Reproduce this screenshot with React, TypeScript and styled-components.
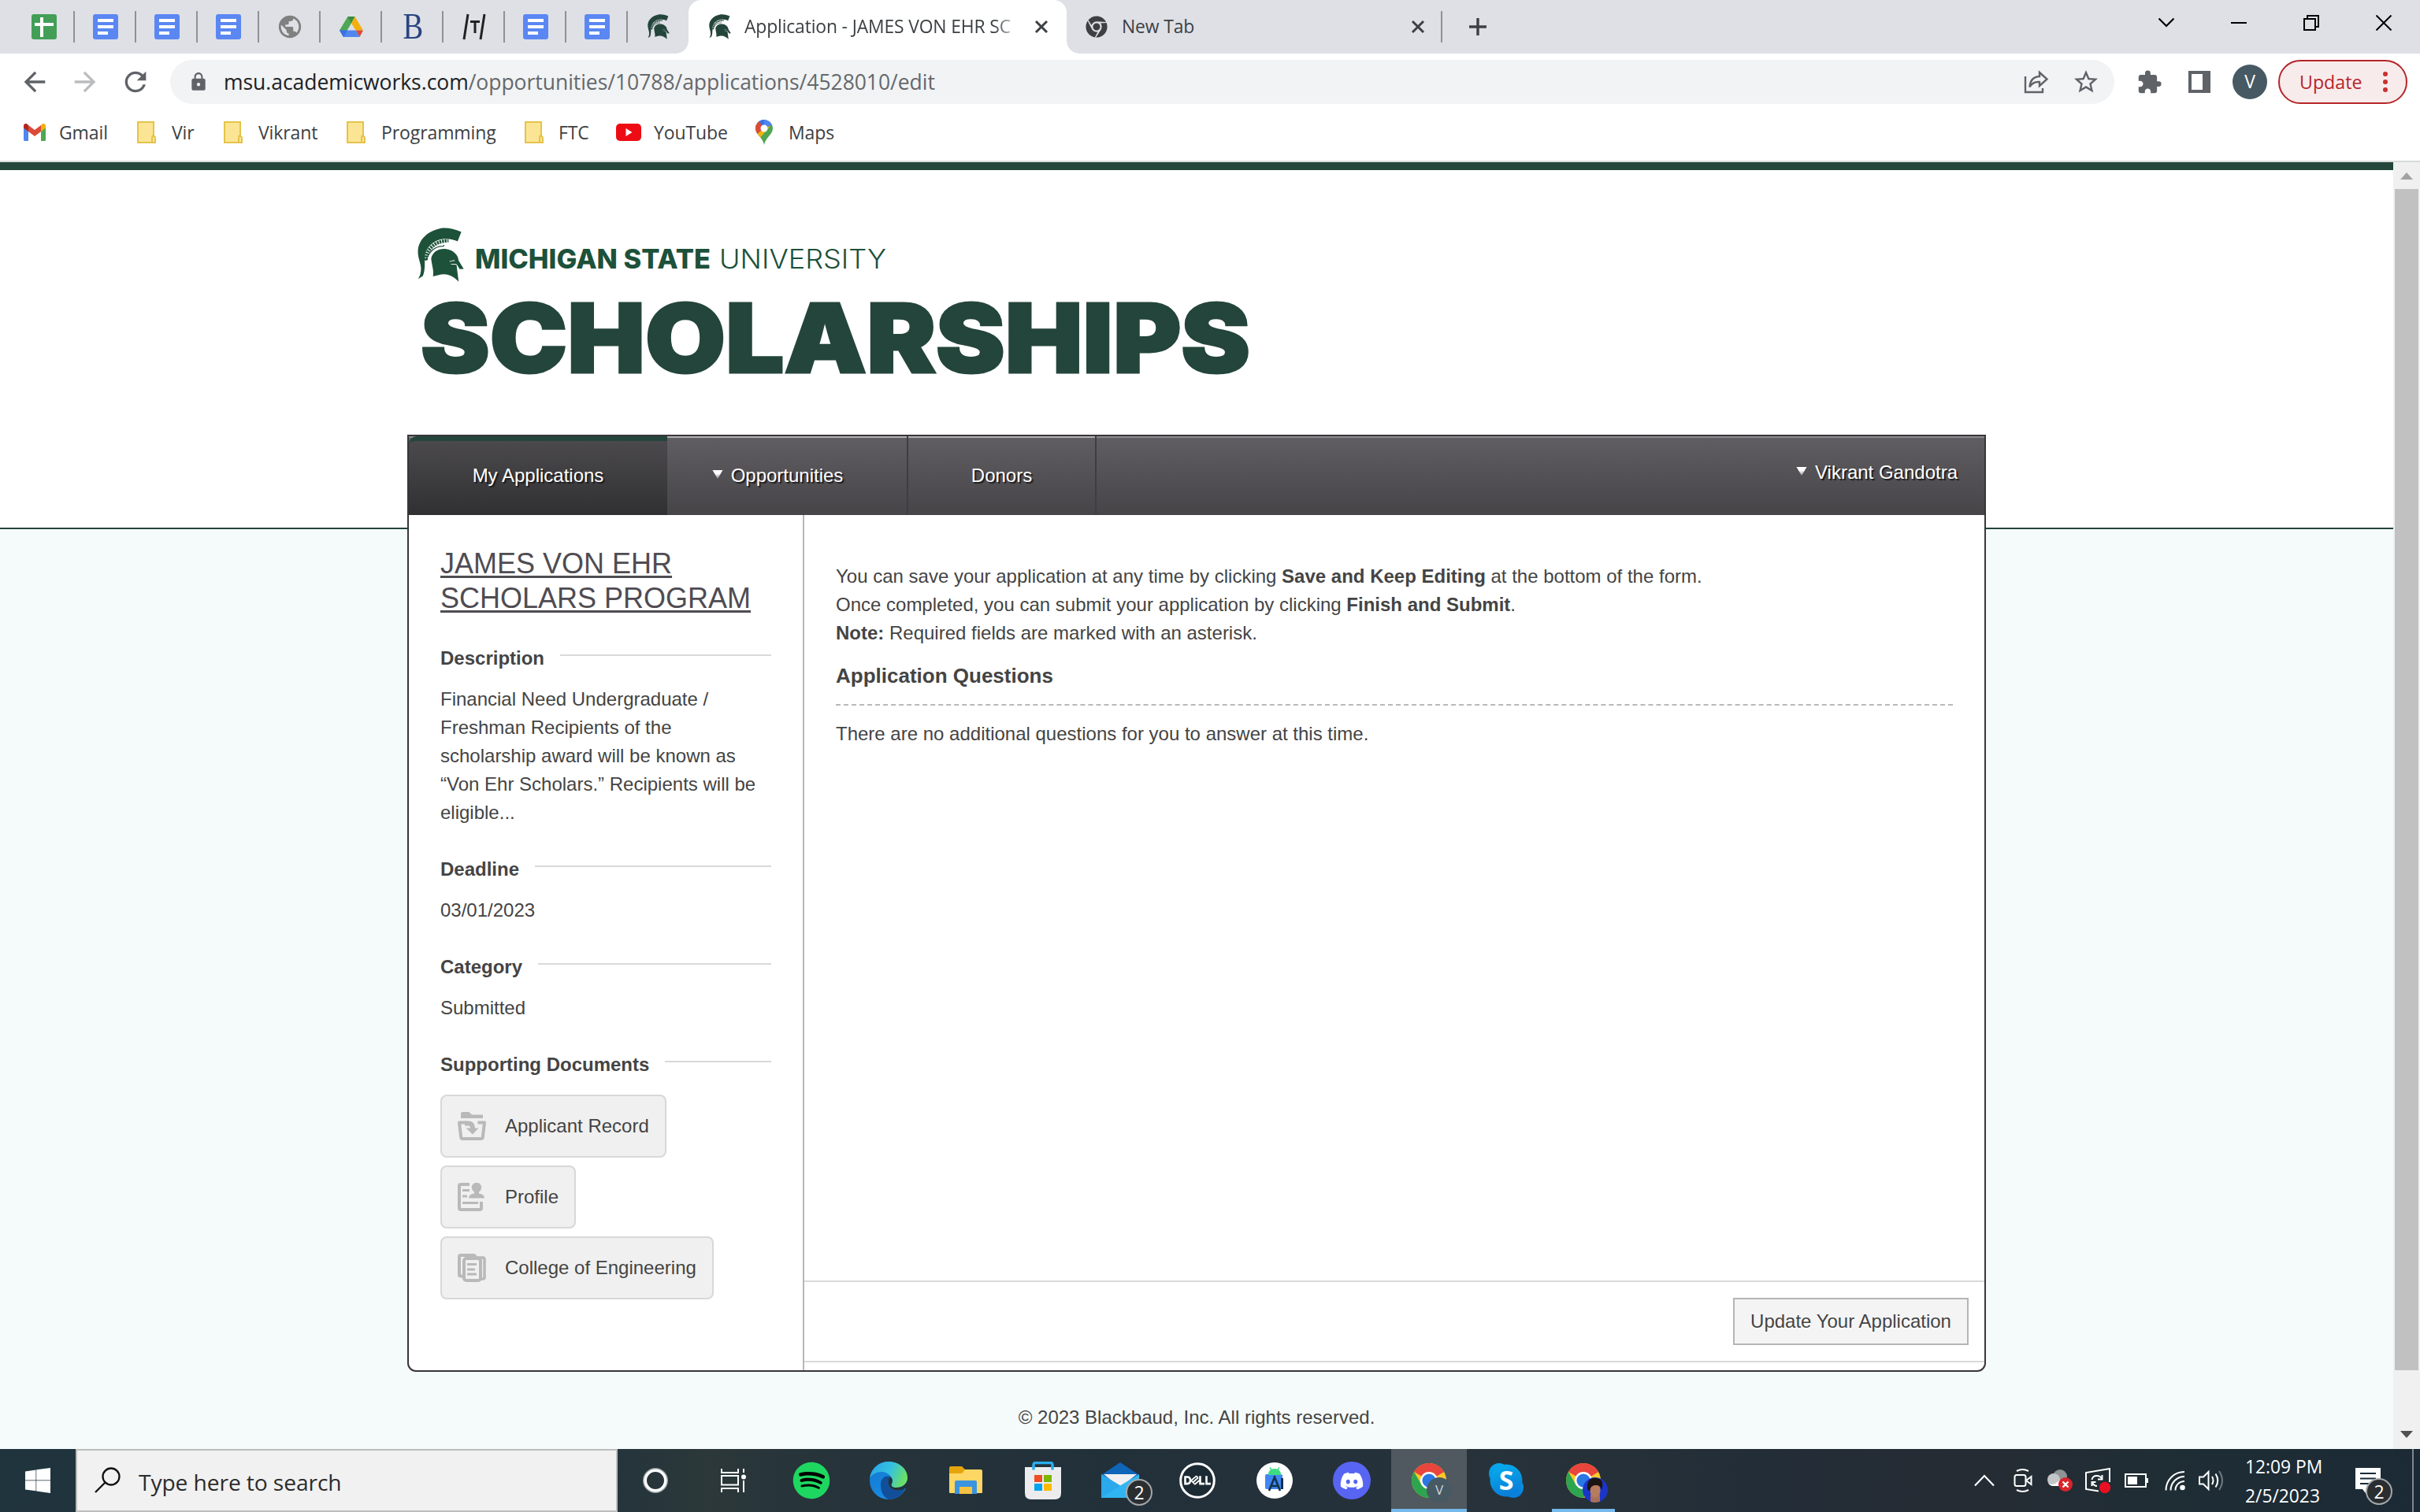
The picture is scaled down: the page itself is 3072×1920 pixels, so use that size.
import React from "react";
import styled, { createGlobalStyle, css } from "styled-components";
import {
  MdArrowBack,
  MdArrowForward,
  MdExtension,
  MdLock,
  MdPublic,
  MdRefresh,
  MdStarBorder,
} from "react-icons/md";
import { FaChrome, FaDiscord, FaSpotify } from "react-icons/fa";

const GlobalStyle = createGlobalStyle`
  * { box-sizing: border-box; }
  html, body { margin: 0; padding: 0; }
  body { width: 3072px; height: 1920px; overflow: hidden; background: #fff; }
`;

const uiFont = css`
  font-family: "Open Sans", "Noto Sans", sans-serif;
`;

const pageFont = css`
  font-family: "Liberation Sans", Arial, sans-serif;
  font-size: 24px;
  line-height: 36px;
`;

const Screen = styled.div`
  width: 3072px;
  height: 1920px;
  display: flex;
  flex-direction: column;
  ${uiFont}
`;

/* ---------- Tab strip ---------- */

const TabStrip = styled.div`
  height: 68px;
  flex: none;
  display: flex;
  align-items: center;
  background: #dee0e6;
  padding-left: 17px;
`;

const PinnedTab = styled.div<{ $last?: boolean }>`
  width: ${(p) => (p.$last ? 77 : 78)}px;
  height: 40px;
  display: flex;
  align-items: center;
  justify-content: center;
  border-right: ${(p) => (p.$last ? "none" : "2px solid #8f9196")};
  padding-left: ${(p) => (p.$last ? 0 : 2)}px;
`;

const ActiveTab = styled.div`
  position: relative;
  width: 480px;
  height: 68px;
  display: flex;
  align-items: center;
  padding-left: 26px;
  background: #fff;
  border-radius: 16px 16px 0 0;
  &::before,
  &::after {
    content: "";
    position: absolute;
    bottom: 0;
    width: 16px;
    height: 16px;
  }
  &::before {
    left: -16px;
    background: radial-gradient(circle at 0 0, transparent 15.5px, #fff 16px);
  }
  &::after {
    right: -16px;
    background: radial-gradient(circle at 100% 0, transparent 15.5px, #fff 16px);
  }
`;

const IdleTab = styled.div`
  width: 477px;
  height: 40px;
  display: flex;
  align-items: center;
  padding-left: 24px;
  border-right: 2px solid #8f9196;
`;

const TabTitle = styled.div<{ $width: number; $gap: number; $fade?: boolean }>`
  width: ${(p) => p.$width}px;
  margin-left: ${(p) => p.$gap}px;
  white-space: nowrap;
  font-size: 22.9px;
  line-height: 36px;
  letter-spacing: -0.15px;
  color: #3c4043;
  ${(p) =>
    p.$fade &&
    css`
      mask-image: linear-gradient(to right, #000 90%, transparent 100%);
    `}
`;

const TabClose = styled.div<{ $gap: number }>`
  margin-left: ${(p) => p.$gap}px;
  display: flex;
`;

const NewTabButton = styled.div`
  margin-left: 33px;
  display: flex;
`;

const WindowControls = styled.div`
  margin-left: auto;
  margin-right: 36px;
  margin-bottom: 10px;
  display: flex;
  align-items: center;
  gap: 72px;
`;

/* ---------- Toolbar ---------- */

const Toolbar = styled.div`
  height: 72px;
  flex: none;
  display: flex;
  align-items: center;
  padding: 0 16px 0 24px;
  background: #fff;
  color: #5f6368;
`;

const NavButton = styled.div<{ $off?: boolean }>`
  width: 40px;
  height: 40px;
  margin-right: 24px;
  display: flex;
  font-size: 40px;
  color: ${(p) => (p.$off ? "#babcbe" : "#5f6368")};
`;

const Omnibox = styled.div`
  width: 2468px;
  height: 56px;
  display: flex;
  align-items: center;
  padding-left: 23px;
  padding-right: 18px;
  border-radius: 28px;
  background: #f1f3f4;
`;

const Url = styled.div`
  margin-left: 19px;
  flex: 1;
  font-size: 26.5px;
  line-height: 40px;
  letter-spacing: -0.04px;
  color: #65686c;
  span {
    color: #202124;
  }
`;

const OmniAction = styled.div<{ $gap?: number }>`
  margin-left: ${(p) => p.$gap ?? 0}px;
  display: flex;
`;

const ToolbarIcon = styled.div<{ $gap: number }>`
  margin-left: ${(p) => p.$gap}px;
  display: flex;
`;

const Avatar = styled.div`
  width: 44px;
  height: 44px;
  margin-left: 28px;
  border-radius: 50%;
  background: #475963;
  color: #fff;
  font-size: 23px;
  line-height: 43px;
  text-align: center;
`;

const UpdateButton = styled.div`
  width: 164px;
  height: 56px;
  margin-left: 14px;
  padding: 0 23px 0 25px;
  display: flex;
  align-items: center;
  justify-content: space-between;
  border: 2px solid #b5252a;
  border-radius: 28px;
  background: #f8ebeb;
  color: #b5252a;
  font-size: 23.2px;
`;

/* ---------- Bookmarks ---------- */

const BookmarksBar = styled.div`
  height: 66px;
  flex: none;
  display: grid;
  grid-template-columns: 144px 110px 156px 226px 116px 177px 160px;
  align-items: center;
  padding-left: 30px;
  padding-bottom: 9px;
  border-bottom: 2px solid #d6dad9;
  background: #fff;
`;

const Bookmark = styled.div<{ $gap: number }>`
  display: flex;
  align-items: center;
  gap: ${(p) => p.$gap}px;
  font-size: 23px;
  line-height: 36px;
  letter-spacing: -0.1px;
  color: #3c4043;
  white-space: nowrap;
`;

/* ---------- Page ---------- */

const Viewport = styled.div`
  height: 1634px;
  flex: none;
  display: flex;
`;

const Page = styled.div`
  width: 3038px;
  display: flex;
  flex-direction: column;
  align-items: center;
  border-top: 10px solid #24453b;
  background: linear-gradient(
    #fff 0 454px,
    #24453b 454px 456px,
    #f5fbfb 456px
  );
  color: #444;
  ${pageFont}
`;

const Header = styled.header`
  width: 2004px;
  height: 336px;
  flex: none;
`;

const Panel = styled.div`
  width: 2004px;
  height: 1190px;
  flex: none;
  display: flex;
  flex-direction: column;
  border: 2px solid #39363a;
  border-radius: 0 0 11px 11px;
  background: #fff;
  overflow: hidden;
`;

const Nav = styled.nav`
  height: 100px;
  flex: none;
  display: flex;
  background: linear-gradient(#605e62, #464447);
  box-shadow: inset 0 2px 0 #8c8a8e;
  color: #fff;
  text-shadow: 2px 2px 1px #1c1b1d;
`;

const NavItem = styled.div<{
  $width: number;
  $active?: boolean;
  $menu?: boolean;
}>`
  width: ${(p) => p.$width}px;
  display: flex;
  align-items: center;
  justify-content: center;
  gap: 10px;
  padding-right: ${(p) => (p.$menu ? 24 : 0)}px;
  ${(p) =>
    p.$active
      ? css`
          border-top: 6px solid #24453b;
          border-top-left-radius: 10px;
          padding-bottom: 6px;
          background: linear-gradient(#4b494c, #303032);
        `
      : css`
          border-right: 2px solid #3f3d41;
          box-shadow: inset 0 2px 0 #b2b1b4;
        `}
`;

const UserMenu = styled.div`
  margin-left: auto;
  padding: 0 34px 8px 0;
  display: flex;
  align-items: center;
  gap: 10px;
`;

const Columns = styled.div`
  flex: 1;
  display: grid;
  grid-template-columns: 502px 1fr;
`;

const Sidebar = styled.aside`
  padding: 40px 40px 0;
  border-right: 2px solid #b7b7b7;
`;

const ProgramTitle = styled.h1`
  margin: 0 0 36px;
  font-size: 36px;
  font-weight: 400;
  line-height: 44px;
  color: #4f4c52;
  text-decoration: underline;
  text-decoration-thickness: 3px;
  text-underline-offset: 3px;
`;

const SectionHeading = styled.h2`
  margin: 0;
  height: 36px;
  display: flex;
  align-items: center;
  gap: 20px;
  font-size: 24px;
  white-space: nowrap;
  &::after {
    content: "";
    flex: 1;
    height: 2px;
    margin-bottom: 8px;
    background: #d9d9d9;
  }
`;

const SectionText = styled.p`
  margin: 16px 0 36px;
`;

const Documents = styled.div`
  margin-top: 20px;
  display: flex;
  flex-direction: column;
  align-items: flex-start;
  gap: 10px;
`;

const DocumentButton = styled.div`
  height: 80px;
  padding: 0 20px;
  display: flex;
  align-items: center;
  gap: 24px;
  border: 2px solid #d8d8d8;
  border-radius: 8px;
  background: #f0f0f0;
`;

const Main = styled.main`
  display: flex;
  flex-direction: column;
  padding-top: 60px;
`;

const MainText = styled.p<{ $top?: number }>`
  margin: ${(p) => p.$top ?? 0}px 40px 0;
`;

const QuestionsHeading = styled.h2`
  margin: 18px 40px 0;
  padding-bottom: 18px;
  border-bottom: 2px dashed #b9b9b9;
  font-size: 26px;
  line-height: 36px;
`;

const Actions = styled.div`
  margin: auto 0 10px;
  padding: 20px;
  display: flex;
  justify-content: flex-end;
  border-top: 2px solid #d9d9d9;
  border-bottom: 2px solid #d9d9d9;
`;

const ActionButton = styled.div`
  width: 299px;
  height: 60px;
  border: 2px solid #b5b5b5;
  background: #f4f4f4;
  line-height: 56px;
  text-align: center;
  text-shadow: 0 2px 2px #fff;
`;

const Copyright = styled.footer`
  margin-top: 40px;
`;

const Scrollbar = styled.div`
  width: 34px;
  display: flex;
  flex-direction: column;
  align-items: center;
  background: #f0f0f0;
`;

const ScrollArrow = styled.div<{ $down?: boolean }>`
  height: ${(p) => (p.$down ? 100 : 34)}px;
  display: flex;
  align-items: flex-end;
  padding-bottom: ${(p) => (p.$down ? 14 : 12)}px;
`;

const ScrollThumb = styled.div`
  width: 30px;
  height: 1500px;
  background: #c1c1c1;
`;

/* ---------- Taskbar ---------- */

const Taskbar = styled.div`
  height: 80px;
  flex: none;
  display: flex;
  background: linear-gradient(
    90deg,
    #20343e 0,
    #23343d 760px,
    #2c3839 900px,
    #27343a 1000px,
    #22303a 1400px,
    #27323a 1900px,
    #232d37 2250px,
    #262c34 2500px,
    #1f2d35 2750px,
    #1b2a35 3072px
  );
  color: #fff;
`;

const StartButton = styled.div`
  width: 96px;
  display: flex;
  align-items: center;
  justify-content: center;
`;

const SearchBox = styled.div`
  width: 688px;
  display: flex;
  align-items: center;
  padding-left: 21px;
  gap: 23px;
  border: 2px solid #bdbdbd;
  background: #f1f1f1;
  color: #2b2b2b;
  font-size: 28.2px;
  line-height: 40px;
  letter-spacing: -0.1px;
  span {
    padding-top: 4px;
  }
`;

const TaskButton = styled.div<{ $width?: number }>`
  position: relative;
  width: ${(p) => p.$width ?? 98}px;
  display: flex;
  align-items: center;
  justify-content: center;
`;

const ActiveApp = styled.div`
  width: 96px;
  height: 80px;
  display: flex;
  align-items: center;
  justify-content: center;
  background: #50595f;
  border-bottom: 4px solid #76b9ed;
  padding-top: 4px;
`;

const RunningApp = styled.div`
  width: 80px;
  height: 80px;
  display: flex;
  align-items: center;
  justify-content: center;
  border-bottom: 4px solid #76b9ed;
  padding-top: 4px;
`;

const CountBadge = styled.div<{ $x: number; $y: number; $size: number }>`
  position: absolute;
  left: ${(p) => p.$x}px;
  top: ${(p) => p.$y}px;
  width: ${(p) => p.$size}px;
  height: ${(p) => p.$size}px;
  border: 2px solid #a4a7a9;
  border-radius: 50%;
  background: #2b2e30;
  color: #fff;
  font-size: 23px;
  line-height: ${(p) => p.$size - 4}px;
  text-align: center;
`;

const InitialBadge = styled.div`
  position: absolute;
  left: 46px;
  top: 36px;
  width: 32px;
  height: 32px;
  border-radius: 50%;
  background: #475963;
  color: #cfd5d8;
  font-size: 17px;
  line-height: 32px;
  text-align: center;
`;

const FaceBadge = styled.div`
  position: absolute;
  left: 48px;
  top: 36px;
  display: flex;
`;

const Tray = styled.div`
  margin-left: auto;
  display: flex;
  align-items: center;
`;

const TrayIcon = styled.div<{ $width: number; $gap: number }>`
  width: ${(p) => p.$width}px;
  margin-right: ${(p) => p.$gap}px;
  display: flex;
  justify-content: center;
`;

const Clock = styled.div`
  width: 140px;
  padding-top: 2px;
  font-size: 22.8px;
  line-height: 37px;
  white-space: nowrap;
`;

const Notifications = styled.div`
  position: relative;
  width: 72px;
  height: 80px;
  padding-top: 24px;
`;

const ShowDesktop = styled.div`
  width: 10px;
  height: 80px;
  border-left: 2px solid #7d868b;
`;

/* ---------- Drawings ---------- */

const SheetsIcon = () => (
  <svg width="32" height="32" viewBox="0 0 32 32">
    <rect width="32" height="32" rx="3" fill="#439f57" />
    <path d="M13 4v25M4 13h24" stroke="#fff" strokeWidth="4" />
  </svg>
);

const DocsIcon = () => (
  <svg width="32" height="32" viewBox="0 0 32 32">
    <rect width="32" height="32" rx="3" fill="#5a87f2" />
    <path d="M6 8h20M6 16h20M6 24h13" stroke="#fff" strokeWidth="4" />
  </svg>
);

const DriveIcon = () => (
  <svg width="30" height="27" viewBox="0 0 30 27">
    <path d="M10.5 0h9L15 8.5 5 25.5 0 17.5z" fill="#4fa653" />
    <path d="M10.5 0h9L15 8.5z" fill="#3b8a43" />
    <path d="M19.5 0 30 17.5H20.5L15 8.5z" fill="#f2b010" />
    <path d="M30 17.5 25.5 26 20.5 17.5z" fill="#dc4a38" />
    <path d="M0 17.5h20.5L25.5 26H5z" fill="#5185f0" />
    <path d="M0 17.5h10L5 26z" fill="#3a70e0" />
  </svg>
);

const BLetter = styled.span`
  font-family: "Liberation Serif", serif;
  font-size: 46px;
  line-height: 44px;
  color: #2a4480;
  transform: scaleX(0.84);
`;

const TMark = () => (
  <svg width="30" height="34" viewBox="0 0 30 34">
    <path d="M7 1 2 33M28 1 23 33" stroke="#222" strokeWidth="3" />
    <path d="M10 10.500h12M16 10v15" stroke="#222" strokeWidth="3" />
  </svg>
);

const Spartan = ({ w, h, color }: { w: number; h: number; color: string }) => (
  <svg
    width={w}
    height={h}
    viewBox="62 56 174 204"
    preserveAspectRatio="none"
    fill={color}
  >
    <path d="M226 72C196 60 170 55 148 59C104 68 70 96 64 138C61 170 76 190 75 212C75 228 70 240 64 249L82 238C92 215 88 185 90 160C98 118 140 92 180 99C192 100 204 104 212 108Z" />
    <path
      d="M94 178C94 140 124 106 178 105"
      fill="none"
      stroke={color}
      strokeWidth="13"
      strokeDasharray="7 3"
    />
    <path d="M93 180C104 150 122 126 158 126L162 122" fill="none" stroke={color} strokeWidth="4" />
    <path d="M113 172C118 146 142 134 166 136C196 140 214 158 216 180L235 211L220 212L208 193L186 191L184 183L202 181L200 178L182 182L188 194L208 196L216 259C198 240 182 232 162 231L150 232L120 239C124 218 116 200 113 172Z" />
  </svg>
);

const CloseX = () => (
  <svg width="18" height="18" viewBox="0 0 18 18">
    <path d="M2 2l14 14M16 2L2 16" stroke="#3c4043" strokeWidth="3" />
  </svg>
);

const PlusIcon = () => (
  <svg width="24" height="24" viewBox="0 0 24 24">
    <path d="M12 1v22M1 12h22" stroke="#3c4043" strokeWidth="3.400" />
  </svg>
);

const ChevronDown = () => (
  <svg width="20" height="20" viewBox="0 0 20 20">
    <path d="M0.500 4.500l9.500 9.500 9.500-9.500" fill="none" stroke="#000" strokeWidth="2.200" />
  </svg>
);

const MinimizeIcon = () => (
  <svg width="20" height="20" viewBox="0 0 20 20">
    <path d="M0 10h20" stroke="#000" strokeWidth="2" />
  </svg>
);

const RestoreIcon = () => (
  <svg width="20" height="20" viewBox="0 0 20 20" fill="none" stroke="#000" strokeWidth="2">
    <rect x="1" y="5" width="14" height="14" />
    <path d="M5 5V1h14v14h-4" />
  </svg>
);

const WindowCloseIcon = () => (
  <svg width="20" height="20" viewBox="0 0 20 20">
    <path d="M0.500 0.500l19 19M19.500 0.500l-19 19" stroke="#000" strokeWidth="2" />
  </svg>
);

const ShareIcon = () => (
  <svg width="32" height="30" viewBox="0 0 32 30" fill="none" stroke="#5f6368" strokeWidth="2.400">
    <path d="M2 8v20h22v-5" />
    <path d="M20 3l9.500 8.500L20 20v-5C14 14.500 10 17 7.500 21.500C8 14 12 8.500 20 8z" />
  </svg>
);

const SidePanelIcon = () => (
  <svg width="28" height="28" viewBox="0 0 28 28">
    <path d="M0 0h28v28H0zM4 4v20h14V4z" fill="#5f6368" fillRule="evenodd" />
  </svg>
);

const DotsIcon = () => (
  <svg width="6" height="28" viewBox="0 0 6 28" fill="#c93030">
    <circle cx="3" cy="4" r="3" />
    <circle cx="3" cy="14" r="3" />
    <circle cx="3" cy="24" r="3" />
  </svg>
);

const GmailIcon = () => (
  <svg width="28" height="22" viewBox="0 0 28 22">
    <path d="M0 3v17.500Q0 22 1.500 22H6V9z" fill="#5185f0" />
    <path d="M28 3v17.500Q28 22 26.500 22H22V9z" fill="#4fa653" />
    <path d="M22 2v8l6-4.500V3C28 0 25-1 23 1z" fill="#f2b010" />
    <path d="M6 2v8L0 5.500V3C0 0 3-1 5 1z" fill="#b3261e" />
    <path d="M6 2l8 6 8-6v8l-8 6-8-6z" fill="#dc4a38" />
  </svg>
);

const FolderIcon = () => (
  <svg width="24" height="28" viewBox="0 0 24 28">
    <path d="M1 1h20v18q2 0 2 3v5H1z" fill="#fbe595" stroke="#e4c349" strokeWidth="2" />
    <path d="M21 18q-2 0-2 3v5" fill="none" stroke="#e4c349" strokeWidth="2" />
  </svg>
);

const YouTubeIcon = () => (
  <svg width="32" height="22" viewBox="0 0 32 22">
    <rect width="32" height="22" rx="5" fill="#ee0c14" />
    <path d="M12.500 6v10l8-5z" fill="#fff" />
  </svg>
);

const MapsIcon = () => (
  <svg width="22" height="32" viewBox="0 0 22 32">
    <defs>
      <clipPath id="pin">
        <path d="M11 0C5 0 0 5 0 11C0 19 9 22 11 32C13 22 22 19 22 11C22 5 17 0 11 0z" />
      </clipPath>
    </defs>
    <g clipPath="url(#pin)">
      <rect width="22" height="32" fill="#4fa653" />
      <path d="M0 0h22v6L11 11z" fill="#5185f0" />
      <path d="M3 0h8l0 11L3 3z" fill="#3a70e0" />
      <path d="M0 0h3l8 11L1 19H0z" fill="#dc4a38" />
      <path d="M11 11L1 19l4 5L19 8z" fill="#f2b010" />
      <path d="M22 0L11 11 19 4z" fill="#5185f0" />
    </g>
    <circle cx="11" cy="11" r="4.500" fill="#fff" />
  </svg>
);

const MsuLogo = () => (
  <svg width="1100" height="336" viewBox="0 0 1100 336">
    <g transform="translate(13 73)">
      <Spartan w={59} h={69} color="#1d513a" />
    </g>
    <g fontFamily="Inter, 'Open Sans', sans-serif" fontSize="33.500" fill="#1d513a">
      <text
        x="86"
        y="125"
        fontWeight="800"
        textLength="299"
        lengthAdjust="spacingAndGlyphs"
      >
        MICHIGAN STATE
      </text>
      <text
        x="396"
        y="125"
        fontWeight="300"
        textLength="212"
        lengthAdjust="spacingAndGlyphs"
      >
        UNIVERSITY
      </text>
    </g>
    <text
      x="17"
      y="257"
      fontFamily="Inter, 'Open Sans', sans-serif"
      fontSize="121"
      fontWeight="900"
      fill="#24453b"
      stroke="#24453b"
      strokeWidth="3"
      textLength="1053"
      lengthAdjust="spacingAndGlyphs"
    >
      SCHOLARSHIPS
    </text>
  </svg>
);

const MenuArrow = () => (
  <svg width="14" height="12" viewBox="0 0 14 12">
    <defs>
      <linearGradient id="menuArrow" x1="0" y1="0" x2="0" y2="1">
        <stop offset="0.4" stopColor="#fff" />
        <stop offset="1" stopColor="#fff" stopOpacity="0.3" />
      </linearGradient>
    </defs>
    <path d="M0.500 0h13L7 11z" fill="url(#menuArrow)" />
  </svg>
);

const ArrowSlot = styled.span`
  display: flex;
  padding-bottom: 2px;
`;

const RecordIcon = () => (
  <svg width="36" height="36" viewBox="0 0 36 36">
    <path d="M4 8V2q0-2 2-2h7q2 0 3.500 2l1.500 1.500h14V8z" fill="#b9b9b9" />
    <path
      d="M11 13.500H2L4.200 32q.2 2 2 2h23.600q1.800 0 2-2L34 13.500h-8.500"
      fill="none"
      stroke="#b9b9b9"
      strokeWidth="4"
      strokeLinejoin="round"
    />
    <path d="M9 14.500h5q5 0 5 7" fill="none" stroke="#b9b9b9" strokeWidth="6" />
    <path d="M10.500 20.500h16L19 28.500z" fill="#b9b9b9" />
  </svg>
);

const ProfileIcon = () => (
  <svg width="36" height="36" viewBox="0 0 36 36">
    <path
      d="M15 2H4Q2 2 2 4v28q0 2 2 2h24q2 0 2-2v-8"
      fill="none"
      stroke="#b9b9b9"
      strokeWidth="4"
    />
    <path d="M6 9.500h9M6 17h6M6 25.500h20" stroke="#b9b9b9" strokeWidth="3.200" />
    <circle cx="24" cy="6" r="6.200" fill="#b9b9b9" />
    <path d="M14 19.500q0-5 7-6v-3h6v3q7 1 7 6z" fill="#b9b9b9" />
  </svg>
);

const CollegeIcon = () => (
  <svg width="36" height="36" viewBox="0 0 36 36" fill="none" stroke="#b9b9b9">
    <path d="M6 28.500H4q-2 0-2-2V4q0-2 2-2h16q2 0 2 2" strokeWidth="4" />
    <path d="M30 32h2q2 0 2-2V7q0-2-2-2H20" strokeWidth="3.500" />
    <rect x="8" y="6" width="21" height="28" rx="3" fill="#f0f0f0" strokeWidth="4" />
    <path d="M12 13.500h12M12 20h10M12 26h12" strokeWidth="3.200" />
  </svg>
);

const UpArrow = () => (
  <svg width="16" height="9" viewBox="0 0 16 9">
    <path d="M8 0l8 9H0z" fill="#a3a3a3" />
  </svg>
);

const DownArrow = () => (
  <svg width="16" height="9" viewBox="0 0 16 9">
    <path d="M8 9l8-9H0z" fill="#505050" />
  </svg>
);

const WindowsIcon = () => (
  <svg width="32" height="32" viewBox="0 0 32 32" fill="#fff">
    <path d="M0 4.500l13.500-2V15.500H0zM14.200 2.300L32 0v15.500H14.200zM0 16.300h13.500v13L0 27.500zM14.200 16.300H32V32l-17.800-2.400z" />
  </svg>
);

const SearchIcon = () => (
  <svg width="34" height="34" viewBox="0 0 34 34" fill="none" stroke="#111" strokeWidth="2.300">
    <circle cx="22" cy="12" r="10.500" />
    <path d="M14.500 19.500L2 32" />
  </svg>
);

const CortanaIcon = () => (
  <svg width="32" height="32" viewBox="0 0 32 32" fill="none">
    <circle cx="16" cy="16" r="14.500" stroke="#97a0a3" strokeWidth="3" />
    <circle cx="16" cy="16" r="12.800" stroke="#fff" strokeWidth="3.600" />
  </svg>
);

const TaskViewIcon = () => (
  <svg width="32" height="30" viewBox="0 0 32 30" fill="none" stroke="#fff" strokeWidth="2">
    <path d="M1 0v5h21V0M1 30v-5h21v5M29 0v5M29 15v15" />
    <rect x="1" y="9" width="21" height="11.500" />
    <circle cx="29" cy="10.500" r="2" fill="#fff" />
  </svg>
);

const SpotifyIcon = () => (
  <svg width="48" height="48" viewBox="0 0 48 48">
    <circle cx="24" cy="24" r="22" fill="#000" />
    <FaSpotify size={48} color="#1ed760" />
  </svg>
);

const EdgeIcon = () => (
  <svg width="48" height="48" viewBox="0 0 48 48">
    <defs>
      <linearGradient id="edgeTop" x1="0" y1="0.3" x2="1" y2="0.6">
        <stop offset="0" stopColor="#2aa5e8" />
        <stop offset="0.5" stopColor="#35c1e0" />
        <stop offset="1" stopColor="#6fe35a" />
      </linearGradient>
      <linearGradient id="edgeLeft" x1="0" y1="0" x2="0.7" y2="1">
        <stop offset="0" stopColor="#1276cc" />
        <stop offset="1" stopColor="#1a90e8" />
      </linearGradient>
    </defs>
    <circle cx="24" cy="24" r="24" fill="url(#edgeLeft)" />
    <path d="M0 21C2 8 12 0 24 0C38 0 48 10 48 20C48 28 42 33 34 33C29 33 26.500 31 28 28C31 24 27 14 16 13C9 13 3 16 0 21z" fill="url(#edgeTop)" />
    <path d="M14 27C15 20 21 17 26 19C23 22 22 30 28 34.500C34 38 40 37 45 34C41 43 33 48 24 48C17 45 13 36 14 27z" fill="#114f9b" />
    <path d="M26 19C30 22 29 26 28 28C26.500 31 29 33 34 33C40 33 46 30 48 23L48 32Q47 34 45 34C40 37 34 38 28 34.500C22 30 23 22 26 19z" fill="#22323a" />
  </svg>
);

const ExplorerIcon = () => (
  <svg width="44" height="36" viewBox="0 0 44 36">
    <path d="M1 10V2q0-2 2-2h13q2 0 3 2l3 3v6z" fill="#e5a50a" />
    <path d="M1 9h16l4-5h20q2 0 2 2v27q0 1-1 1H2q-1 0-1-1z" fill="#fdd663" />
    <path d="M8 35V20q0-2 2-2h24q2 0 2 2v15h-6v-9H14v9z" fill="#3b94e0" />
    <rect x="14" y="26" width="16" height="9" fill="#f5c242" />
  </svg>
);

const StoreIcon = () => (
  <svg width="46" height="48" viewBox="0 0 46 48">
    <path d="M11 10V4q0-2.500 2.500-2.500h19Q35 1.500 35 4v6" fill="none" stroke="#28aef0" strokeWidth="3.500" />
    <path d="M0 7h46v33q0 8-8 8H8q-8 0-8-8z" fill="#ececee" />
    <rect x="12" y="17" width="10" height="9" fill="#f04e23" />
    <rect x="24" y="17" width="10" height="9" fill="#7db700" />
    <rect x="12" y="28" width="10" height="9" fill="#00a3ee" />
    <rect x="24" y="28" width="10" height="9" fill="#fdb900" />
    <path d="M11 7v3.500M35 7v3.500" stroke="#28aef0" strokeWidth="3.500" />
  </svg>
);

const MailIcon = () => (
  <svg width="48" height="46" viewBox="0 0 48 46">
    <path d="M0 16L24 0l24 16v28H0z" fill="#0f65b8" />
    <path d="M3 15h42L24 32z" fill="#f0f0f2" />
    <path d="M0 15l48 29q0 1-1 1H1q-1 0-1-1z" fill="#1691dd" />
    <path d="M48 15L0 44v1h48z" fill="#31b5f2" />
    <path d="M0 15l24 14.500L0 44z" fill="#2aa9ec" />
  </svg>
);

const DellIcon = () => (
  <svg width="46" height="46" viewBox="0 0 46 46">
    <circle cx="23" cy="23" r="21.300" fill="#1c2a33" stroke="#fff" strokeWidth="3" />
    <g fill="none" stroke="#fff" strokeWidth="2.600">
      <path d="M7.500 18.500h2.500q4 0 4 4.300t-4 4.300H7.500z" />
      <path d="M14.500 23.500l7-6 2.500 2M17 25.500l7-6M19.500 28l7-6M14.500 22.500l5.500 5.500" strokeWidth="1.700" />
      <path d="M26.500 17.300v9.800h5.500M34.500 17.300v9.800h5.500" />
    </g>
  </svg>
);

const AndroidStudioIcon = () => (
  <svg width="46" height="46" viewBox="0 0 46 46">
    <circle cx="23" cy="23" r="23" fill="#fff" />
    <rect x="11" y="15" width="22" height="19" rx="2" fill="#4285f4" />
    <path d="M15 16q0-8 8-8t8 8z" fill="#3ddc84" />
    <path d="M17 6.500l2 3M29 6.500l-2 3" stroke="#3ddc84" strokeWidth="1.500" />
    <path d="M23 17v4M22.500 20L16 36M23.500 20L30 36M18 30h10" fill="none" stroke="#10344a" strokeWidth="2.600" />
    <path d="M32.500 20v14" stroke="#10344a" strokeWidth="3" />
  </svg>
);

const DiscordIcon = () => (
  <svg width="48" height="48" viewBox="0 0 48 48">
    <circle cx="24" cy="24" r="24" fill="#5865f2" />
    <g transform="translate(8.500 9)">
      <FaDiscord size={31} color="#fff" />
    </g>
  </svg>
);

const ChromeIcon = () => (
  <svg width="44" height="44" viewBox="0 0 44 44">
    <circle cx="22" cy="22" r="22" fill="#f9c928" />
    <path d="M22 22L3 11A22 22 0 0 1 41 11z" fill="#e8453c" />
    <path d="M22 11h19L22 22z" fill="#e8453c" />
    <path d="M3 11l9.500 16.500L22 33l9.500-5.500L22 44A22 22 0 0 1 3 11z" fill="#2da44f" />
    <circle cx="22" cy="22" r="11" fill="#fff" />
    <circle cx="22" cy="22" r="8.600" fill="#2b78e4" />
  </svg>
);

const SkypeGlyph = styled.div`
  position: absolute;
  inset: 0;
  text-align: center;
  font-size: 34px;
  font-weight: 700;
  line-height: 78px;
`;

const SkypeIcon = () => (
  <svg width="44" height="44" viewBox="0 0 44 44">
    <defs>
      <linearGradient id="skype" x1="0" y1="0" x2="0.3" y2="1">
        <stop offset="0" stopColor="#06b0ee" />
        <stop offset="1" stopColor="#0a7fd9" />
      </linearGradient>
    </defs>
    <g fill="url(#skype)">
      <circle cx="13" cy="13" r="13" />
      <circle cx="31" cy="31" r="13" />
      <circle cx="22" cy="22" r="20.500" />
    </g>
  </svg>
);

const FaceIcon = () => (
  <svg width="32" height="32" viewBox="0 0 32 32">
    <defs>
      <clipPath id="face">
        <circle cx="16" cy="16" r="16" />
      </clipPath>
    </defs>
    <g clipPath="url(#face)">
      <rect width="32" height="32" fill="#1a36c8" />
      <path d="M10 32V22h12v10z" fill="#a8705a" />
      <ellipse cx="16" cy="16.500" rx="6.500" ry="9.500" fill="#b77c60" />
      <path d="M6 15C5 4 11 0 17 1C25 1 27 8 24 16C23 12 21 10 17 10C12 10 10 12 9 18z" fill="#1c1413" />
    </g>
  </svg>
);

const TrayChevron = () => (
  <svg width="26" height="16" viewBox="0 0 26 16">
    <path d="M1 14.500L13 2l12 12.500" fill="none" stroke="#fff" strokeWidth="2.200" />
  </svg>
);

const MeetIcon = () => (
  <svg width="24" height="32" viewBox="0 0 24 32" fill="none" stroke="#fff" strokeWidth="2">
    <path d="M4 4q7.500-4 15 0M4 28q7.500 4 15 0" />
    <rect x="1.500" y="9" width="14" height="14" rx="2.500" />
    <path d="M16 16l6.500-5v10z" />
  </svg>
);

const CloudIcon = () => (
  <svg width="32" height="28" viewBox="0 0 32 28">
    <circle cx="16" cy="9" r="9" fill="#8e9496" />
    <circle cx="8" cy="13" r="8" fill="#c3c6c8" />
    <path d="M1 17q6 5 14-3v7H8q-5 0-7-4z" fill="#fff" />
    <circle cx="23" cy="19" r="9" fill="#da242b" />
    <path d="M19.500 15.500l7 7M26.500 15.500l-7 7" stroke="#fff" strokeWidth="2.400" />
  </svg>
);

const SyncIcon = () => (
  <svg width="32" height="32" viewBox="0 0 32 32" fill="none" stroke="#fff" strokeWidth="2">
    <path d="M31 18V1L1 6v21l16 2.500" />
    <path d="M8.500 15q1-5 6-5t7 4M21.500 9v5.500H16M8.500 23v-5h5M9 18.500q2 4.500 6 4.500" />
    <circle cx="25" cy="25" r="7.200" fill="#e81123" stroke="none" />
  </svg>
);

const BatteryIcon = () => (
  <svg width="30" height="18" viewBox="0 0 30 18">
    <rect x="1" y="1" width="26" height="16" fill="none" stroke="#fff" strokeWidth="2" />
    <rect x="4" y="4" width="12" height="10" fill="#fff" />
    <rect x="28" y="6" width="2" height="6" fill="#fff" />
  </svg>
);

const WifiIcon = () => (
  <svg width="26" height="26" viewBox="0 0 26 26" fill="none" stroke="#fff" strokeWidth="2">
    <path d="M1.500 25.500C1.500 12 12 2 25 2M7.500 25.500C7.500 15.500 15.500 8 25 8M13.500 25.500C13.500 19 18.500 14 25 14" />
    <circle cx="22.500" cy="22" r="3.300" fill="#fff" stroke="none" />
  </svg>
);

const VolumeIcon = () => (
  <svg width="34" height="30" viewBox="0 0 34 30" fill="none" stroke="#fff" strokeWidth="2">
    <path d="M1 10.500h5L12.500 4v22L6 19.500H1z" />
    <path d="M17 10q3 5 0 10M21.500 6.500q5.500 8.500 0 17" />
    <path d="M26 3q8 12 0 24" stroke="#6f7a80" />
  </svg>
);

const NoteIcon = () => (
  <svg width="32" height="40" viewBox="0 0 32 40">
    <path d="M0 0h32v27H16L16 36 9 27H0z" fill="#fff" />
    <path d="M6 7h20M6 13.500h20M6 20h13" stroke="#1c2b35" strokeWidth="2.200" />
  </svg>
);

/* ---------- Screen ---------- */

const pinned = [
  <SheetsIcon />,
  <DocsIcon />,
  <DocsIcon />,
  <DocsIcon />,
  <MdPublic size={34} color="#808080" />,
  <DriveIcon />,
  <BLetter>B</BLetter>,
  <TMark />,
  <DocsIcon />,
  <DocsIcon />,
];

const bookmarks = [
  { label: "Gmail", gap: 17, icon: <GmailIcon /> },
  { label: "Vir", gap: 20, icon: <FolderIcon /> },
  { label: "Vikrant", gap: 20, icon: <FolderIcon /> },
  { label: "Programming", gap: 20, icon: <FolderIcon /> },
  { label: "FTC", gap: 19, icon: <FolderIcon /> },
  { label: "YouTube", gap: 16, icon: <YouTubeIcon /> },
  { label: "Maps", gap: 20, icon: <MapsIcon /> },
];

const documents = [
  { label: "Applicant Record", icon: <RecordIcon /> },
  { label: "Profile", icon: <ProfileIcon /> },
  { label: "College of Engineering", icon: <CollegeIcon /> },
];

export default function App() {
  return (
    <Screen>
      <GlobalStyle />
      <TabStrip>
        {pinned.map((icon, i) => (
          <PinnedTab key={i}>{icon}</PinnedTab>
        ))}
        <PinnedTab $last>
          <Spartan w={28} h={32} color="#24453b" />
        </PinnedTab>
        <ActiveTab>
          <Spartan w={28} h={32} color="#24453b" />
          <TabTitle $width={352} $gap={17} $fade>
            Application - JAMES VON EHR SC
          </TabTitle>
          <TabClose $gap={16}>
            <CloseX />
          </TabClose>
        </ActiveTab>
        <IdleTab>
          <FaChrome size={28} color="#3c4043" />
          <TabTitle $width={351} $gap={18}>
            New Tab
          </TabTitle>
          <TabClose $gap={16}>
            <CloseX />
          </TabClose>
        </IdleTab>
        <NewTabButton>
          <PlusIcon />
        </NewTabButton>
        <WindowControls>
          <ChevronDown />
          <MinimizeIcon />
          <RestoreIcon />
          <WindowCloseIcon />
        </WindowControls>
      </TabStrip>

      <Toolbar>
        <NavButton>
          <MdArrowBack />
        </NavButton>
        <NavButton $off>
          <MdArrowForward />
        </NavButton>
        <NavButton>
          <MdRefresh />
        </NavButton>
        <Omnibox>
          <MdLock size={26} />
          <Url>
            <span>msu.academicworks.com</span>
            /opportunities/10788/applications/4528010/edit
          </Url>
          <OmniAction>
            <ShareIcon />
          </OmniAction>
          <OmniAction $gap={29}>
            <MdStarBorder size={36} />
          </OmniAction>
        </Omnibox>
        <ToolbarIcon $gap={28}>
          <MdExtension size={33} />
        </ToolbarIcon>
        <ToolbarIcon $gap={33}>
          <SidePanelIcon />
        </ToolbarIcon>
        <Avatar>V</Avatar>
        <UpdateButton>
          Update
          <DotsIcon />
        </UpdateButton>
      </Toolbar>

      <BookmarksBar>
        {bookmarks.map((b) => (
          <Bookmark key={b.label} $gap={b.gap}>
            {b.icon}
            {b.label}
          </Bookmark>
        ))}
      </BookmarksBar>

      <Viewport>
        <Page>
          <Header>
            <MsuLogo />
          </Header>
          <Panel>
            <Nav>
              <NavItem $width={328} $active>
                My Applications
              </NavItem>
              <NavItem $width={306} $menu>
                <ArrowSlot>
                  <MenuArrow />
                </ArrowSlot>
                Opportunities
              </NavItem>
              <NavItem $width={239}>Donors</NavItem>
              <UserMenu>
                <ArrowSlot>
                  <MenuArrow />
                </ArrowSlot>
                Vikrant Gandotra
              </UserMenu>
            </Nav>
            <Columns>
              <Sidebar>
                <ProgramTitle>
                  JAMES VON EHR
                  <br />
                  SCHOLARS PROGRAM
                </ProgramTitle>
                <SectionHeading>Description</SectionHeading>
                <SectionText>
                  Financial Need Undergraduate /<br />
                  Freshman Recipients of the
                  <br />
                  scholarship award will be known as
                  <br />
                  “Von Ehr Scholars.” Recipients will be
                  <br />
                  eligible...
                </SectionText>
                <SectionHeading>Deadline</SectionHeading>
                <SectionText>03/01/2023</SectionText>
                <SectionHeading>Category</SectionHeading>
                <SectionText>Submitted</SectionText>
                <SectionHeading>Supporting Documents</SectionHeading>
                <Documents>
                  {documents.map((d) => (
                    <DocumentButton key={d.label}>
                      {d.icon}
                      {d.label}
                    </DocumentButton>
                  ))}
                </Documents>
              </Sidebar>
              <Main>
                <MainText>
                  You can save your application at any time by clicking{" "}
                  <b>Save and Keep Editing</b> at the bottom of the form.
                  <br />
                  Once completed, you can submit your application by clicking{" "}
                  <b>Finish and Submit</b>.<br />
                  <b>Note:</b> Required fields are marked with an asterisk.
                </MainText>
                <QuestionsHeading>Application Questions</QuestionsHeading>
                <MainText $top={18}>
                  There are no additional questions for you to answer at this
                  time.
                </MainText>
                <Actions>
                  <ActionButton>Update Your Application</ActionButton>
                </Actions>
              </Main>
            </Columns>
          </Panel>
          <Copyright>© 2023 Blackbaud, Inc. All rights reserved.</Copyright>
        </Page>
        <Scrollbar>
          <ScrollArrow>
            <UpArrow />
          </ScrollArrow>
          <ScrollThumb />
          <ScrollArrow $down>
            <DownArrow />
          </ScrollArrow>
        </Scrollbar>
      </Viewport>

      <Taskbar>
        <StartButton>
          <WindowsIcon />
        </StartButton>
        <SearchBox>
          <SearchIcon />
          <span>Type here to search</span>
        </SearchBox>
        <TaskButton $width={96}>
          <CortanaIcon />
        </TaskButton>
        <TaskButton $width={101}>
          <TaskViewIcon />
        </TaskButton>
        <TaskButton>
          <SpotifyIcon />
        </TaskButton>
        <TaskButton>
          <EdgeIcon />
        </TaskButton>
        <TaskButton>
          <ExplorerIcon />
        </TaskButton>
        <TaskButton>
          <StoreIcon />
        </TaskButton>
        <TaskButton>
          <MailIcon />
          <CountBadge $x={56} $y={38} $size={34}>
            2
          </CountBadge>
        </TaskButton>
        <TaskButton>
          <DellIcon />
        </TaskButton>
        <TaskButton>
          <AndroidStudioIcon />
        </TaskButton>
        <TaskButton>
          <DiscordIcon />
        </TaskButton>
        <TaskButton>
          <ActiveApp>
            <ChromeIcon />
          </ActiveApp>
          <InitialBadge>V</InitialBadge>
        </TaskButton>
        <TaskButton>
          <SkypeIcon />
          <SkypeGlyph>S</SkypeGlyph>
        </TaskButton>
        <TaskButton>
          <RunningApp>
            <ChromeIcon />
          </RunningApp>
          <FaceBadge>
            <FaceIcon />
          </FaceBadge>
        </TaskButton>
        <Tray>
          <TrayIcon $width={26} $gap={24}>
            <TrayChevron />
          </TrayIcon>
          <TrayIcon $width={24} $gap={19}>
            <MeetIcon />
          </TrayIcon>
          <TrayIcon $width={32} $gap={16}>
            <CloudIcon />
          </TrayIcon>
          <TrayIcon $width={32} $gap={18}>
            <SyncIcon />
          </TrayIcon>
          <TrayIcon $width={30} $gap={21}>
            <BatteryIcon />
          </TrayIcon>
          <TrayIcon $width={26} $gap={17}>
            <WifiIcon />
          </TrayIcon>
          <TrayIcon $width={34} $gap={25}>
            <VolumeIcon />
          </TrayIcon>
          <Clock>
            12:09 PM
            <br />
            2/5/2023
          </Clock>
          <Notifications>
            <NoteIcon />
            <CountBadge $x={13} $y={37} $size={34}>
              2
            </CountBadge>
          </Notifications>
          <ShowDesktop />
        </Tray>
      </Taskbar>
    </Screen>
  );
}
